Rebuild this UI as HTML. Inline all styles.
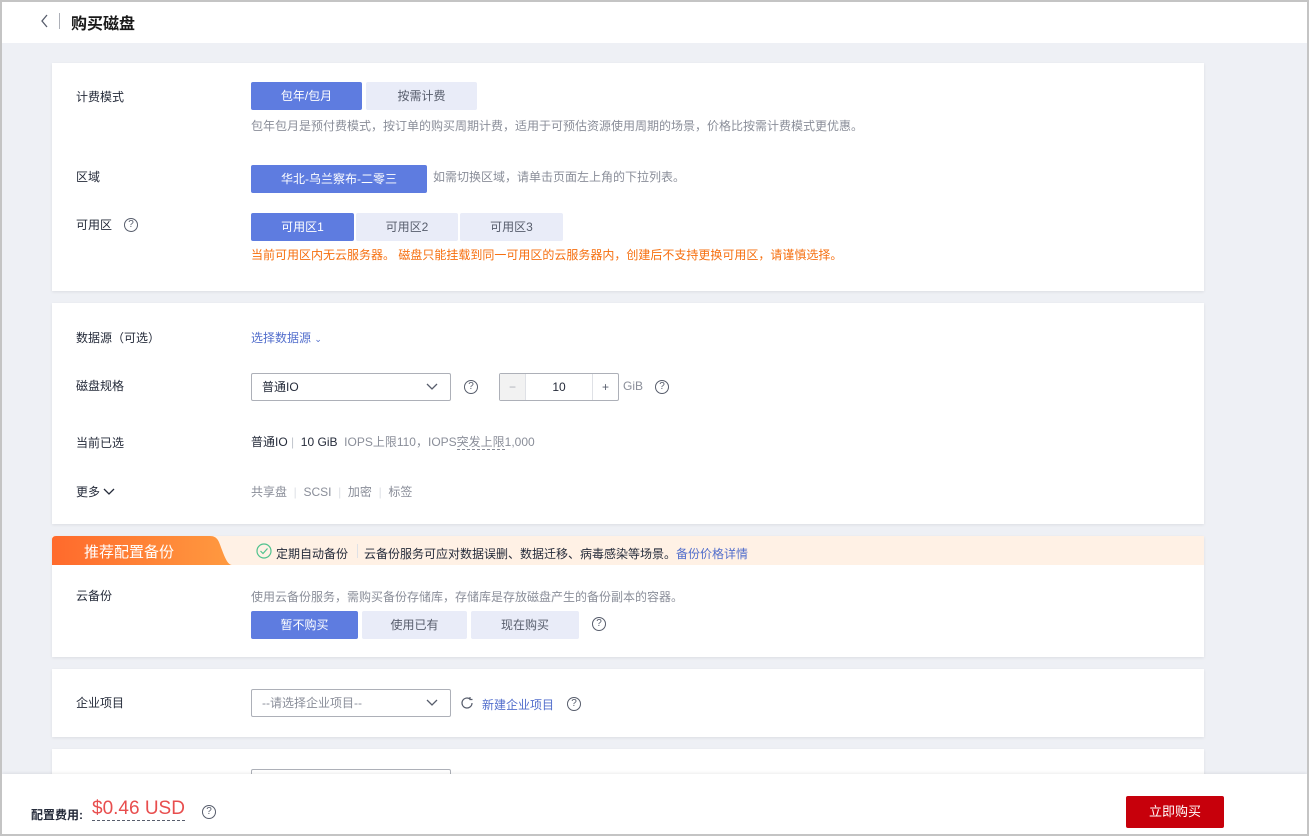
<!DOCTYPE html>
<html><head><meta charset="utf-8"><style>
*{box-sizing:border-box;margin:0;padding:0}
body{width:1309px;height:836px;overflow:hidden;background:#c4c4c4;font-family:"Liberation Sans","Noto Sans CJK SC",sans-serif;font-size:12px;color:#252b3a;position:relative}
.frame{position:absolute;left:2px;top:2px;width:1305px;height:832px;background:#eef0f5;overflow:hidden}
.hdr{position:absolute;left:0;top:0;width:1305px;height:41px;background:#fff}
.abs{position:absolute;white-space:nowrap}
.card{position:absolute;left:50px;width:1152px;background:#fff;box-shadow:0 1px 3px rgba(0,0,0,.08)}
.lbl{position:absolute;left:24px;line-height:16px}
.btn{position:absolute;height:28px;line-height:28px;text-align:center;background:#e9ecf8;color:#575d6c;border-radius:2px;font-size:12px}
.btn.on{background:#5e7ce0;color:#fff}
.desc{color:#8a8e99}
.q{position:absolute;width:14px;height:14px;border:1px solid #575d6c;border-radius:50%;font-size:10px;line-height:12px;text-align:center;color:#575d6c}
.sel{position:absolute;height:28px;border:1px solid #adb0b8;border-radius:2px;background:#fff;line-height:26px;padding-left:10px}
.link{color:#526ecc}
</style></head><body>
<div class="frame">
<div class="hdr">
<svg class="abs" style="left:38px;top:12px" width="10" height="14" viewBox="0 0 10 14"><path d="M7 1L2 7l5 6" fill="none" stroke="#575d6c" stroke-width="1.3"/></svg>
<div class="abs" style="left:57px;top:11px;width:1px;height:16px;background:#adb0b8"></div>
<div class="abs" style="left:69px;top:8px;font-size:16px;font-weight:bold;color:#191919">购买磁盘</div>
</div>

<div class="card" style="top:61px;height:228px">
<div class="lbl" style="top:26px">计费模式</div>
<div class="btn on" style="left:199px;top:19px;width:111px">包年/包月</div>
<div class="btn" style="left:314px;top:19px;width:111px">按需计费</div>
<div class="abs desc" style="left:199px;top:54px">包年包月是预付费模式，按订单的购买周期计费，适用于可预估资源使用周期的场景，价格比按需计费模式更优惠。</div>
<div class="lbl" style="top:106px">区域</div>
<div class="btn on" style="left:199px;top:102px;width:176px">华北-乌兰察布-二零三</div>
<div class="abs desc" style="left:381px;top:105px">如需切换区域，请单击页面左上角的下拉列表。</div>
<div class="lbl" style="top:154px">可用区</div>
<div class="q" style="left:72px;top:155px">?</div>
<div class="btn on" style="left:199px;top:150px;width:103px">可用区1</div>
<div class="btn" style="left:304px;top:150px;width:102px">可用区2</div>
<div class="btn" style="left:408px;top:150px;width:103px">可用区3</div>
<div class="abs" style="left:199px;top:183px;color:#f66f0f">当前可用区内无云服务器。 磁盘只能挂载到同一可用区的云服务器内，创建后不支持更换可用区，请谨慎选择。</div>
</div>

<div class="card" style="top:301px;height:221px">
<div class="lbl" style="top:27px">数据源（可选）</div>
<div class="abs link" style="left:199px;top:26px">选择数据源 <span style="font-size:9px">&#8964;</span></div>
<div class="lbl" style="top:75px">磁盘规格</div>
<div class="sel" style="left:199px;top:70px;width:200px">普通IO
<svg class="abs" style="left:174px;top:9px" width="12" height="8" viewBox="0 0 12 8"><path d="M1 1l5 5 5-5" fill="none" stroke="#575d6c" stroke-width="1.3"/></svg></div>
<div class="q" style="left:412px;top:77px">?</div>
<div class="abs" style="left:447px;top:70px;width:120px;height:28px;border:1px solid #adb0b8;border-radius:2px">
<div class="abs" style="left:0;top:0;width:26px;height:26px;background:#f2f2f2;border-right:1px solid #dfe1e6;text-align:center;line-height:26px;color:#adb0b8">−</div>
<div class="abs" style="left:26px;top:0;width:66px;line-height:26px;text-align:center">10</div>
<div class="abs" style="left:92px;top:0;width:26px;height:26px;border-left:1px solid #dfe1e6;text-align:center;line-height:26px;color:#575d6c">+</div>
</div>
<div class="abs desc" style="left:571px;top:76px">GiB</div>
<div class="q" style="left:603px;top:77px">?</div>
<div class="lbl" style="top:132px">当前已选</div>
<div class="abs" style="left:199px;top:130px">普通IO <span style="color:#c0c4cc">|</span> &nbsp;10 GiB &nbsp;<span class="desc">IOPS上限110，IOPS<span style="border-bottom:1px dashed #8a8e99">突发上限</span>1,000</span></div>
<div class="lbl" style="top:181px">更多 <svg width="12" height="8" viewBox="0 0 12 8"><path d="M1 1l5 5 5-5" fill="none" stroke="#252b3a" stroke-width="1.3"/></svg></div>
<div class="abs desc" style="left:199px;top:180px">共享盘 &nbsp;<span style="color:#dfe1e6">|</span>&nbsp; SCSI &nbsp;<span style="color:#dfe1e6">|</span>&nbsp; 加密 &nbsp;<span style="color:#dfe1e6">|</span>&nbsp; 标签</div>
</div>

<div class="card" style="top:534px;height:121px">
<div class="abs" style="left:0;top:0;width:1152px;height:29px;background:#fff1e5"></div>
<svg class="abs" style="left:0;top:0" width="180" height="29" viewBox="0 0 180 29"><defs><linearGradient id="g" x1="0" x2="1"><stop offset="0" stop-color="#ff6a2c"/><stop offset="1" stop-color="#ff9a40"/></linearGradient></defs><path d="M4 0H158c8 0 9 6 12 14s6 15 10 15H0V4Q0 0 4 0z" fill="url(#g)"/></svg>
<div class="abs" style="left:32px;top:5px;font-size:15px;color:#fff">推荐配置备份</div>
<svg class="abs" style="left:204px;top:7px" width="16" height="16" viewBox="0 0 16 16"><circle cx="8" cy="8" r="7" fill="none" stroke="#50c28e" stroke-width="1.2"/><path d="M4.5 8l2.5 2.5 4.5-5" fill="none" stroke="#50c28e" stroke-width="1.2"/></svg>
<div class="abs" style="left:224px;top:9px">定期自动备份</div>
<div class="abs" style="left:305px;top:8px;width:1px;height:14px;background:#dfe1e6"></div>
<div class="abs" style="left:312px;top:9px">云备份服务可应对数据误删、数据迁移、病毒感染等场景。<span class="link">备份价格详情</span></div>
<div class="lbl" style="top:52px">云备份</div>
<div class="abs desc" style="left:199px;top:52px">使用云备份服务，需购买备份存储库，存储库是存放磁盘产生的备份副本的容器。</div>
<div class="btn on" style="left:199px;top:75px;width:107px">暂不购买</div>
<div class="btn" style="left:310px;top:75px;width:105px">使用已有</div>
<div class="btn" style="left:419px;top:75px;width:108px">现在购买</div>
<div class="q" style="left:540px;top:81px">?</div>
</div>

<div class="card" style="top:667px;height:68px">
<div class="lbl" style="top:26px">企业项目</div>
<div class="sel" style="left:199px;top:20px;width:200px;color:#8a8e99">--请选择企业项目--
<svg class="abs" style="left:174px;top:9px" width="12" height="8" viewBox="0 0 12 8"><path d="M1 1l5 5 5-5" fill="none" stroke="#575d6c" stroke-width="1.3"/></svg></div>
<svg class="abs" style="left:408px;top:27px" width="14" height="14" viewBox="0 0 14 14"><path d="M12 7a5 5 0 1 1-2-4M10 1v2.5H12.5" fill="none" stroke="#575d6c" stroke-width="1.2"/></svg>
<div class="abs link" style="left:430px;top:27px">新建企业项目</div>
<div class="q" style="left:515px;top:28px">?</div>
</div>

<div class="card" style="top:747px;height:60px">
<div class="sel" style="left:199px;top:20px;width:200px"></div>
</div>

<div class="abs" style="left:0;top:772px;width:1305px;height:60px;background:#fff;box-shadow:0 -1px 3px rgba(0,0,0,.08)">
<div class="abs" style="left:29px;top:32px;font-weight:bold;color:#252b3a">配置费用:</div>
<div class="abs" style="left:90px;top:24px;font-size:19px;color:#e84e4e;border-bottom:1px dashed #575d6c;line-height:22px">$0.46 USD</div>
<div class="q" style="left:200px;top:31px">?</div>
<div class="abs" style="left:1124px;top:22px;width:98px;height:32px;background:#c7000b;border-radius:2px;color:#fff;text-align:center;line-height:32px;font-size:13px">立即购买</div>
</div>
</div>
</body></html>
